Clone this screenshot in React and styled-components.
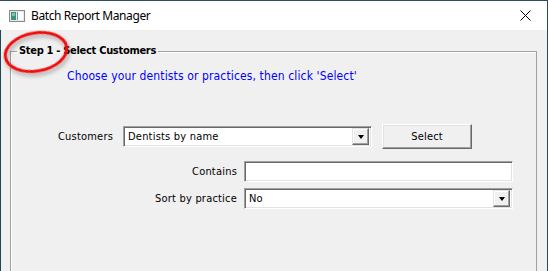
import React from "react";
import styled, { createGlobalStyle } from "styled-components";

const GlobalStyle = createGlobalStyle`
  html, body {
    margin: 0;
    padding: 0;
    background: #ffffff;
  }
  body {
    font-family: "DejaVu Sans Condensed", "DejaVu Sans", sans-serif;
    font-size: 11px;
    color: #000;
  }
`;

const Window = styled.div`
  position: relative;
  width: 548px;
  height: 271px;
  box-sizing: border-box;
  display: flex;
  flex-flow: column;
  border-top: 1px solid #2e4f5e;
  border-right: 1px solid #2a4a58;
  overflow: hidden;
  background: #ffffff;
`;

const TitleBar = styled.div`
  height: 29px;
  display: flex;
  align-items: center;
  padding: 0 0 0 9px;
  background: #ffffff;
  font-family: "Noto Sans", "Open Sans", sans-serif;
  font-size: 12px;
  color: #000;
`;

const AppIcon = styled.svg`
  width: 16px;
  height: 16px;
  margin: 0 6px 0 0;
  flex: none;
`;

const Title = styled.span`
  flex: 1;
  letter-spacing: -0.4px;
`;

const CloseButton = styled.div`
  width: 46px;
  height: 29px;
  display: flex;
  justify-content: center;
  align-items: center;
  margin: 0 -1px 0 0;
`;

const Body = styled.div`
  flex: 1;
  background: #f0f0f0;
  border-left: 1px solid #1f4656;
  padding: 14px 10px 0 9px;
`;

const GroupBox = styled.fieldset`
  margin: 0;
  padding: 0;
  height: 240px;
  border: 1px solid #a0a0a0;
  box-shadow: inset 1px 1px 0 #ffffff;
  box-sizing: border-box;
`;

const Legend = styled.legend`
  margin: 0 0 0 6px;
  padding: 0 2px;
  font-weight: bold;
  line-height: 14px;
  letter-spacing: -0.3px;
`;

const Hint = styled.div`
  margin: 11px 0 0 56px;
  color: #0000ff;
  font-size: 12px;
  line-height: 14px;
  letter-spacing: 0.13px;
`;

const CustomerRow = styled.div`
  display: flex;
  align-items: center;
  margin: 41px 0 0 47px;
`;

const Label = styled.span`
  line-height: 14px;
  white-space: nowrap;
  letter-spacing: 0.2px;
  margin: 0 ${(p) => p.$gap || 0}px 0 0;
`;

const FieldGrid = styled.div`
  display: grid;
  grid-template-columns: 226px 269px;
  row-gap: 6px;
  column-gap: 7px;
  align-items: center;
  margin: 12px 0 0 0;
  & > ${Label} {
    text-align: right;
  }
`;

const Sunken = styled.div`
  box-sizing: border-box;
  width: ${(p) => p.$width}px;
  height: 21px;
  display: flex;
  align-items: center;
  background: #ffffff;
  border: 1px solid;
  border-color: #a0a0a0 #ffffff #ffffff #a0a0a0;
  box-shadow: inset 1px 1px 0 #696969, inset -1px -1px 0 #e3e3e3;
  padding: 1px 2px 1px 4px;
`;

const Value = styled.span`
  flex: 1;
  font-size: 11px;
  line-height: 14px;
  letter-spacing: 0.2px;
`;

const ArrowButton = styled.div`
  width: 17px;
  height: 17px;
  box-sizing: border-box;
  display: flex;
  justify-content: center;
  align-items: center;
  background: #f0f0f0;
  border: 1px solid;
  border-color: #e3e3e3 #696969 #696969 #e3e3e3;
  box-shadow: inset -1px -1px 0 #a0a0a0, inset 1px 1px 0 #ffffff;
  &::after {
    content: "";
    width: 0;
    height: 0;
    border-left: 3.5px solid transparent;
    border-right: 3.5px solid transparent;
    border-top: 4px solid #000;
    margin: 1px 0 0 0;
  }
`;

const PushButton = styled.button`
  width: 90px;
  height: 25px;
  margin: 0 0 0 10px;
  padding: 0;
  box-sizing: border-box;
  font-family: inherit;
  font-size: 11px;
  letter-spacing: 0.2px;
  color: #000;
  background: #f0f0f0;
  border: 1px solid;
  border-color: #ffffff #696969 #696969 #ffffff;
  box-shadow: inset -1px -1px 0 #a0a0a0, inset 1px 1px 0 #e3e3e3;
`;

const Annotation = styled.svg`
  position: absolute;
  left: 0;
  top: 28px;
  width: 80px;
  height: 50px;
  pointer-events: none;
  overflow: visible;
`;

function ComboBox({ width, value }) {
  return (
    <Sunken $width={width}>
      <Value>{value}</Value>
      <ArrowButton />
    </Sunken>
  );
}

function App() {
  return (
    <>
      <GlobalStyle />
      <Window>
        <TitleBar>
          <AppIcon viewBox="0 0 16 16">
            <rect x="0.5" y="2.5" width="15" height="11" fill="#e8e8e8" stroke="#8a8a8a" />
            <rect x="2" y="4" width="5" height="8" fill="#3f8f7a" />
            <rect x="3" y="5" width="3" height="3" fill="#7fc4a8" />
            <rect x="8" y="4" width="6" height="8" fill="#ffffff" />
            <rect x="8" y="4" width="1" height="8" fill="#6f9fb8" />
          </AppIcon>
          <Title>Batch Report Manager</Title>
          <CloseButton>
            <svg width="11" height="11" viewBox="0 0 11 11">
              <path d="M0.5 0.5 L10.5 10.5 M10.5 0.5 L0.5 10.5" stroke="#000" strokeWidth="1" />
            </svg>
          </CloseButton>
        </TitleBar>
        <Body>
          <GroupBox>
            <Legend>Step 1 - Select Customers</Legend>
            <Hint>Choose your dentists or practices, then click 'Select'</Hint>
            <CustomerRow>
              <Label $gap={10}>Customers</Label>
              <ComboBox width={249} value="Dentists by name" />
              <PushButton type="button">Select</PushButton>
            </CustomerRow>
            <FieldGrid>
              <Label>Contains</Label>
              <Sunken $width={269} />
              <Label>Sort by practice</Label>
              <ComboBox width={269} value="No" />
            </FieldGrid>
          </GroupBox>
        </Body>
        <Annotation viewBox="0 0 80 50">
          <defs>
            <filter id="shade" x="-30%" y="-30%" width="160%" height="160%">
              <feGaussianBlur in="SourceAlpha" stdDeviation="2" />
              <feOffset dx="1" dy="3" result="blur" />
              <feComponentTransfer>
                <feFuncA type="linear" slope="0.35" />
              </feComponentTransfer>
              <feMerge>
                <feMergeNode />
                <feMergeNode in="SourceGraphic" />
              </feMerge>
            </filter>
          </defs>
          <ellipse
            cx="36"
            cy="23"
            rx="31"
            ry="19"
            fill="none"
            stroke="#ee1111"
            strokeWidth="3"
            transform="rotate(-10 36 23)"
            filter="url(#shade)"
          />
        </Annotation>
      </Window>
    </>
  );
}

export default App;
